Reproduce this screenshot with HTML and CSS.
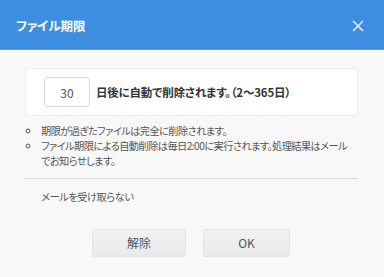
FILE: index.html
```html
<!DOCTYPE html>
<html>
<head lang="ja">
    <meta charset="UTF-8">
    <title>ファイル期限</title>
    <link rel="stylesheet" href="styles.css">
</head>
<body>

<div class="dialog">
    <div class="dialog-header">
        <span class="dialog-title">ファイル期限</span>
        <a href="javascript:void(0);" class="dialog-close">
            <svg width="12" height="12" viewBox="0 0 12 12">
                <path d="M1 1 L11 11 M11 1 L1 11" stroke="#ffffff" stroke-width="1.4" fill="none"/>
            </svg>
        </a>
    </div>

    <div class="dialog-body">
        <div class="expire-box">
            <input type="text" value="30" class="expire-input">
            <span class="expire-text">日後に自動で削除されます。（2～365日）</span>
        </div>

        <ul class="notes">
            <li>期限が過ぎたファイルは完全に削除されます。</li>
            <li>ファイル期限による自動削除は毎日2:00に実行されます。処理結果はメールでお知らせします。</li>
        </ul>

        <div class="mail-option">メールを受け取らない</div>

        <div class="dialog-buttons">
            <a href="javascript:void(0);" class="btn btn-clear">解除</a>
            <a href="javascript:void(0);" class="btn btn-ok">OK</a>
        </div>
    </div>
</div>

</body>
</html>
```

FILE: styles.css
```css
html, body, ul, li, div, span, a {
    padding: 0px;
    margin: 0px;
}

body {
    width: 384px;
    height: 277px;
    overflow: hidden;
    background: #f8f8f8;
    font-family: "Noto Sans CJK JP", "Noto Sans", sans-serif;
    font-feature-settings: "palt";
    color: #555555;
}

a {
    text-decoration: none;
    color: #555555;
}

.dialog {
    height: 277px;
    display: flex;
    flex-direction: column;
}

.dialog-header {
    height: 49px;
    background: #3d8de0;
    border-bottom: 1px solid #5c9fe6;
    display: flex;
    align-items: center;
    justify-content: space-between;
    padding: 0px 20px 0px 16px;
}

.dialog-title {
    color: #ffffff;
    font-size: 12.5px;
    font-weight: bold;
    line-height: 16px;
    margin-top: 2px;
}

.dialog-close {
    display: flex;
    margin-top: 3px;
}

.dialog-body {
    padding: 18px 26px 0px 25px;
}

.expire-box {
    height: 46px;
    background: #ffffff;
    border: 1px solid #ececec;
    display: flex;
    align-items: center;
    padding-left: 18px;
}

.expire-input {
    width: 44px;
    height: 28px;
    border: 1px solid #d6d6d6;
    border-radius: 3px;
    padding: 0px;
    text-align: center;
    font-family: "Noto Sans CJK JP", "Noto Sans", sans-serif;
    font-size: 12px;
    color: #555555;
    background: #ffffff;
    outline: none;
}

.expire-text {
    margin-left: 6px;
    font-size: 11.5px;
    font-weight: bold;
    letter-spacing: -0.2px;
    color: #333333;
    line-height: 16px;
}

.notes {
    list-style: circle;
    margin: 7px 0px 0px 16px;
    padding-right: 8px;
    font-size: 10.2px;
    letter-spacing: -0.55px;
    line-height: 15px;
}

.mail-option {
    margin-top: 10px;
    border-top: 1px solid #dddddd;
    padding: 10px 0px 0px 16px;
    font-size: 10.2px;
    letter-spacing: -0.4px;
    line-height: 15px;
}

.dialog-buttons {
    display: flex;
    justify-content: center;
    gap: 17px;
    margin-top: 25px;
    padding-right: 1px;
}

.btn {
    display: block;
    height: 26px;
    line-height: 26px;
    text-align: center;
    font-size: 12px;
    border: 1px solid #e2e2e2;
    border-radius: 3px;
    background: linear-gradient(#f2f2f2, #e9e9e9);
}

.btn-clear {
    width: 92px;
}

.btn-ok {
    width: 85px;
}
```
